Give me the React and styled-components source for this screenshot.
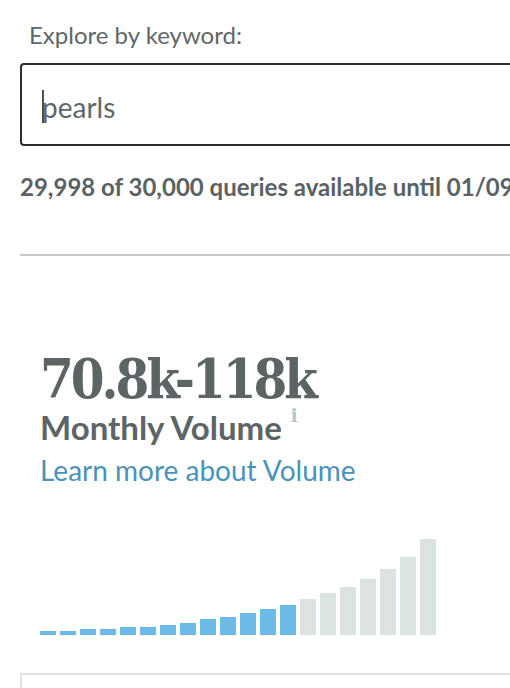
import styled, { createGlobalStyle } from "styled-components";

const GlobalStyle = createGlobalStyle`
  body {
    margin: 0;
    background: #ffffff;
    overflow: hidden;
    font-family: Lato, "Open Sans", sans-serif;
  }
`;

const Page = styled.div`
  width: 560px;
  padding: 21px 0 0 20px;
  color: #5f6769;
`;

const Label = styled.div`
  font-size: 24px;
  line-height: 28px;
  margin-left: 9px;
  color: #5f6769;
`;

const SearchBox = styled.div`
  box-sizing: border-box;
  margin-top: 14px;
  height: 83px;
  border: 2px solid #2b2d2e;
  border-radius: 4px;
  display: flex;
  align-items: center;
  padding: 4px 0 0 20px;
  font-size: 28px;
  color: #5f6769;
`;

const Caret = styled.span`
  display: inline-block;
  width: 2px;
  height: 33px;
  background: #4a4f51;
  margin-right: -2px;
`;

const Quota = styled.div`
  margin-top: 28px;
  font-size: 24px;
  line-height: 26px;
  font-weight: 700;
  color: #5b6264;
  white-space: nowrap;
`;

const Divider = styled.hr`
  margin: 54px 0 0;
  border: 0;
  height: 2px;
  background: #c8c9cc;
`;

const Stats = styled.div`
  padding-left: 20px;
`;

const BigNumber = styled.div`
  margin-top: 94px;
  font-family: "DejaVu Serif Condensed", "DejaVu Serif", serif;
  font-stretch: condensed;
  font-weight: 700;
  font-size: 54px;
  line-height: 58px;
  letter-spacing: -3px;
  color: #5d6466;
`;

const Metric = styled.div`
  display: flex;
  align-items: flex-start;
  font-size: 33px;
  line-height: 38px;
  font-weight: 700;
  color: #5d6466;
`;

const Info = styled.span`
  font-family: "DejaVu Serif", serif;
  font-size: 18px;
  line-height: 18px;
  color: #b8c3c3;
  margin: -1px 0 0 9px;
`;

const LearnLink = styled.a`
  display: block;
  margin-top: 7px;
  font-size: 28px;
  line-height: 34px;
  color: #4b92bb;
  text-decoration: none;
`;

const Chart = styled.div`
  margin-top: 52px;
  height: 96px;
  display: flex;
  align-items: flex-end;
  gap: 4px;
`;

const Bar = styled.div`
  width: 16px;
  background: ${(p) => (p.$projected ? "#dce4e3" : "#6cbae6")};
`;

const Card = styled.div`
  margin-top: 38px;
  height: 40px;
  border-top: 2px solid #dde4e3;
  border-left: 2px solid #dde4e3;
`;

const bars = [4, 4, 6, 6, 8, 8, 10, 12, 16, 18, 22, 26, 30, 36, 42, 48, 56, 66, 78, 96];

const App = () => {
  return (
    <>
      <GlobalStyle />
      <Page>
        <Label>Explore by keyword:</Label>
        <SearchBox>
          <Caret />
          pearls
        </SearchBox>
        <Quota>29,998 of 30,000 queries available until 01/09/2024</Quota>
        <Divider />
        <Stats>
          <BigNumber>70.8k-118k</BigNumber>
          <Metric>
            Monthly Volume
            <Info>i</Info>
          </Metric>
          <LearnLink href="#">Learn more about Volume</LearnLink>
          <Chart>
            {bars.map((h, i) => (
              <Bar key={i} $projected={i >= 13} style={{ height: h }} />
            ))}
          </Chart>
        </Stats>
        <Card />
      </Page>
    </>
  );
};

export default App;
